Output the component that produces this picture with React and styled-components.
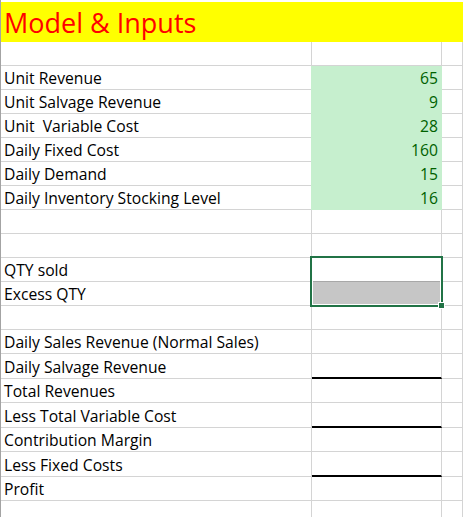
import React from "react";
import styled, { createGlobalStyle } from "styled-components";

const GRID = "#d4d4d4";
const GREEN_FILL = "#c6efce";

const GlobalStyle = createGlobalStyle`
  html, body {
    margin: 0;
    padding: 0;
    background: #fff;
  }
  body {
    font-family: "Open Sans", "Liberation Sans", sans-serif;
  }
`;

const Sheet = styled.div`
  display: grid;
  grid-template-columns: 311px 130px 1fr;
  grid-auto-rows: auto;
  width: 463px;
  height: 517px;
  overflow: hidden;
  box-sizing: border-box;
  padding-top: 2px;
  border-left: 1px solid #a3a3a3;
`;

const TitleBar = styled.div`
  grid-column: 1 / -1;
  height: 40px;
  display: flex;
  align-items: flex-end;
  padding: 0 0 1px 3px;
  box-sizing: border-box;
  background: #ffff00;
  color: #ff0000;
  font-size: 27px;
  white-space: pre;
`;

const Cell = styled.div`
  height: ${(p) => (p.$tall ? 25 : 24)}px;
  box-sizing: border-box;
  border-right: 1px solid ${GRID};
  border-bottom: 1px solid ${GRID};
  display: flex;
  align-items: flex-end;
  font-size: 15.7px;
  line-height: 20px;
  white-space: pre;
`;

const Label = styled(Cell)`
  padding: 0 0 1px 3px;
  color: #000;
`;

const fills = {
  green: GREEN_FILL,
  gray: "#c6c6c6",
};

const Value = styled(Cell)`
  position: relative;
  justify-content: flex-end;
  padding: 0 3px 1px 0;
  color: #006100;
  background: ${(p) => fills[p.$fill] || "#fff"};
  border-right-color: ${(p) => (p.$fill === "green" ? GREEN_FILL : GRID)};
  border-bottom: ${(p) =>
    p.$rule
      ? "2px solid #000"
      : `1px solid ${p.$fill === "green" ? GREEN_FILL : p.$line || GRID}`};
  box-shadow: ${(p) => (p.$fill === "green" ? `-1px 0 0 ${GREEN_FILL}` : "none")};
`;

const Spare = styled(Cell)``;

const Selection = styled.div`
  position: absolute;
  top: -2px;
  left: -2px;
  width: 133px;
  height: 51px;
  box-sizing: border-box;
  border: 2px solid #217346;
  box-shadow: inset 0 0 0 1px #fff;
  z-index: 2;
  pointer-events: none;
`;

const FillHandle = styled.span`
  position: absolute;
  left: 126px;
  top: 44px;
  width: 7px;
  height: 7px;
  box-sizing: border-box;
  background: #217346;
  border: 1px solid #fff;
`;

const rows = [
  {},
  { label: "Unit Revenue", value: 65, fill: "green" },
  { label: "Unit Salvage Revenue", value: 9, fill: "green" },
  { label: "Unit  Variable Cost", value: 28, fill: "green" },
  { label: "Daily Fixed Cost", value: 160, fill: "green" },
  { label: "Daily Demand", value: 15, fill: "green" },
  { label: "Daily Inventory Stocking Level", value: 16, fill: "green" },
  {},
  {},
  { label: "QTY sold", selected: true, line: "#a8a8a8" },
  { label: "Excess QTY", fill: "gray" },
  {},
  { label: "Daily Sales Revenue (Normal Sales)" },
  { label: "Daily Salvage Revenue", rule: true },
  { label: "Total Revenues" },
  { label: "Less Total Variable Cost", rule: true },
  { label: "Contribution Margin" },
  { label: "Less Fixed Costs", rule: true },
  { label: "Profit" },
  {},
];

export default function App() {
  return (
    <>
      <GlobalStyle />
      <Sheet>
        <TitleBar>Model &amp; Inputs</TitleBar>
        {rows.map((row, i) => (
          <React.Fragment key={i}>
            <Label $tall={row.rule}>{row.label}</Label>
            <Value
              $tall={row.rule}
              $fill={row.fill}
              $rule={row.rule}
              $line={row.line}
            >
              {row.value}
              {row.selected && (
                <Selection>
                  <FillHandle />
                </Selection>
              )}
            </Value>
            <Spare $tall={row.rule} />
          </React.Fragment>
        ))}
      </Sheet>
    </>
  );
}
